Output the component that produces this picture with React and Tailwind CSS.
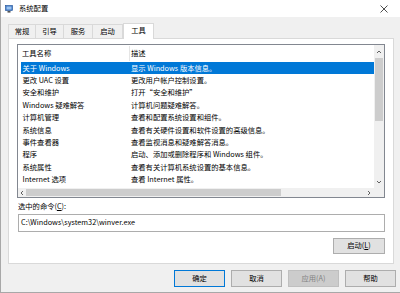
import React from 'react';

const TOOLS = [
  ['关于 Windows', '显示 Windows 版本信息。'],
  ['更改 UAC 设置', '更改用户帐户控制设置。'],
  ['安全和维护', '打开“安全和维护”'],
  ['Windows 疑难解答', '计算机问题疑难解答。'],
  ['计算机管理', '查看和配置系统设置和组件。'],
  ['系统信息', '查看有关硬件设置和软件设置的高级信息。'],
  ['事件查看器', '查看监视消息和疑难解答消息。'],
  ['程序', '启动、添加或删除程序和 Windows 组件。'],
  ['系统属性', '查看有关计算机系统设置的基本信息。'],
  ['Internet 选项', '查看 Internet 属性。'],
];

const TABS = [
  { label: '常规', w: 'w-[28px]' },
  { label: '引导', w: 'w-[29px]' },
  { label: '服务', w: 'w-[30px]' },
  { label: '启动', w: 'w-[31px]' },
];

function Chevron({ dir }) {
  const d = {
    up: 'M1 4 L3 2 L5 4',
    down: 'M1 2 L3 4 L5 2',
    left: 'M4 1 L2 3 L4 5',
    right: 'M2 1 L4 3 L2 5',
  }[dir];
  return (
    <svg width="6" height="6" viewBox="0 0 6 6">
      <path d={d} fill="none" stroke="#606060" strokeWidth="1" />
    </svg>
  );
}

function Button({ children, className = '' }) {
  return (
    <div className={`flex items-center justify-center border ${className}`}>
      {children}
    </div>
  );
}

export default function App() {
  return (
    <div className="w-[400px] h-[293px] bg-[#f0f0f0] flex flex-col border-l border-b border-[#a8a8a8] text-[7.3px] leading-none text-black font-['Noto_Sans_CJK_SC','Liberation_Sans',sans-serif] overflow-hidden">
      {/* title bar */}
      <div className="h-[17px] shrink-0 bg-white flex items-center">
        <svg width="8" height="8" viewBox="0 0 8 8" className="ml-[4px]">
          <rect x="0.5" y="0.5" width="7" height="5" fill="#3a74c4" stroke="#1f4f94" strokeWidth="0.6" />
          <rect x="1.5" y="1.5" width="5" height="3" fill="#9cc4f0" />
          <rect x="2.5" y="6" width="3" height="1.6" fill="#555" />
        </svg>
        <span className="ml-[6px]">系统配置</span>
        <svg width="8" height="8" viewBox="0 0 8 8" className="ml-auto mr-[12px]">
          <path d="M0.5 0.5 L7.5 7.5 M7.5 0.5 L0.5 7.5" stroke="#222" strokeWidth="0.8" />
        </svg>
      </div>

      {/* tabs */}
      <div className="pt-[5px] ml-[7px] flex items-end h-[21px] shrink-0">
        {TABS.map((t) => (
          <div key={t.label} className={`${t.w} h-[14px] -mr-px flex items-center justify-center border border-b-0 border-[#d9d9d9] bg-[#f0f0f0]`}>
            {t.label}
          </div>
        ))}
        <div className="w-[31px] h-[16px] ml-px -mb-px relative z-10 flex items-center justify-center border border-b-0 border-[#d9d9d9] bg-white pb-[2px]">
          工具
        </div>
      </div>

      {/* panel */}
      <div className="ml-[7px] mr-[6px] h-[226px] shrink-0 bg-white border border-[#d9d9d9] flex flex-col px-[8px] pt-[5px]">
        {/* list */}
        <div className="h-[154px] border border-[#828790] flex flex-col shrink-0">
          <div className="flex flex-1 min-h-0">
            <div className="flex-1 flex flex-col">
              <div className="h-[17px] flex items-center shrink-0">
                <span className="pl-[4px] w-[111px]">工具名称</span>
                <div className="w-px h-[15px] bg-[#e5e5e5]" />
                <span className="pl-[1px]">描述</span>
              </div>
              {TOOLS.map(([name, desc], i) => (
                <div
                  key={name}
                  className={`ml-[3px] h-[12.4px] flex items-center shrink-0 ${i === 0 ? 'bg-[#0078d7] text-white' : ''}`}
                >
                  <span className="pl-[1.5px] w-[110px] whitespace-nowrap">{name}</span>
                  <span className="whitespace-nowrap">{desc}</span>
                </div>
              ))}
            </div>
            {/* vertical scrollbar */}
            <div className="w-[10px] bg-[#f0f0f0] flex flex-col items-center">
              <div className="h-[13px] flex items-center justify-center">
                <Chevron dir="up" />
              </div>
              <div className="w-[8px] h-[63px] bg-[#cdcdcd]" />
              <div className="flex-1" />
              <div className="h-[13px] flex items-center justify-center">
                <Chevron dir="down" />
              </div>
            </div>
          </div>
          {/* horizontal scrollbar */}
          <div className="h-[9px] flex shrink-0">
            <div className="flex-1 bg-[#f0f0f0] flex items-center">
              <div className="w-[8px] flex justify-center">
                <Chevron dir="left" />
              </div>
              <div className="w-[255px] h-[7px] bg-[#cdcdcd]" />
              <div className="flex-1" />
              <div className="w-[10px] flex justify-center">
                <Chevron dir="right" />
              </div>
            </div>
            <div className="w-[10px] bg-[#f0f0f0]" />
          </div>
        </div>

        <div className="mt-[3px] h-[12px] flex items-center ml-[1px]">
          选中的命令(<span className="underline">C</span>):
        </div>
        <div className="mt-[1px] h-[18px] ml-[1px] border border-[#adadad] flex items-center pl-[2px]">
          C:\Windows\system32\winver.exe
        </div>
        <div className="mt-[6px] flex justify-end">
          <Button className="w-[52px] h-[16px] bg-[#e1e1e1] border-[#adadad]">
            启动(<span className="underline">L</span>)
          </Button>
        </div>
      </div>

      {/* bottom buttons */}
      <div className="mt-[6px] flex justify-end gap-[6px] pr-[4px]">
        <Button className="w-[51px] h-[17px] bg-[#e1e1e1] border-[#0078d7]">确定</Button>
        <Button className="w-[51px] h-[17px] bg-[#e1e1e1] border-[#adadad]">取消</Button>
        <Button className="w-[51px] h-[17px] bg-[#cccccc] border-[#bfbfbf] text-[#838383]">应用(A)</Button>
        <Button className="w-[51px] h-[17px] bg-[#e1e1e1] border-[#adadad]">帮助</Button>
      </div>
    </div>
  );
}
